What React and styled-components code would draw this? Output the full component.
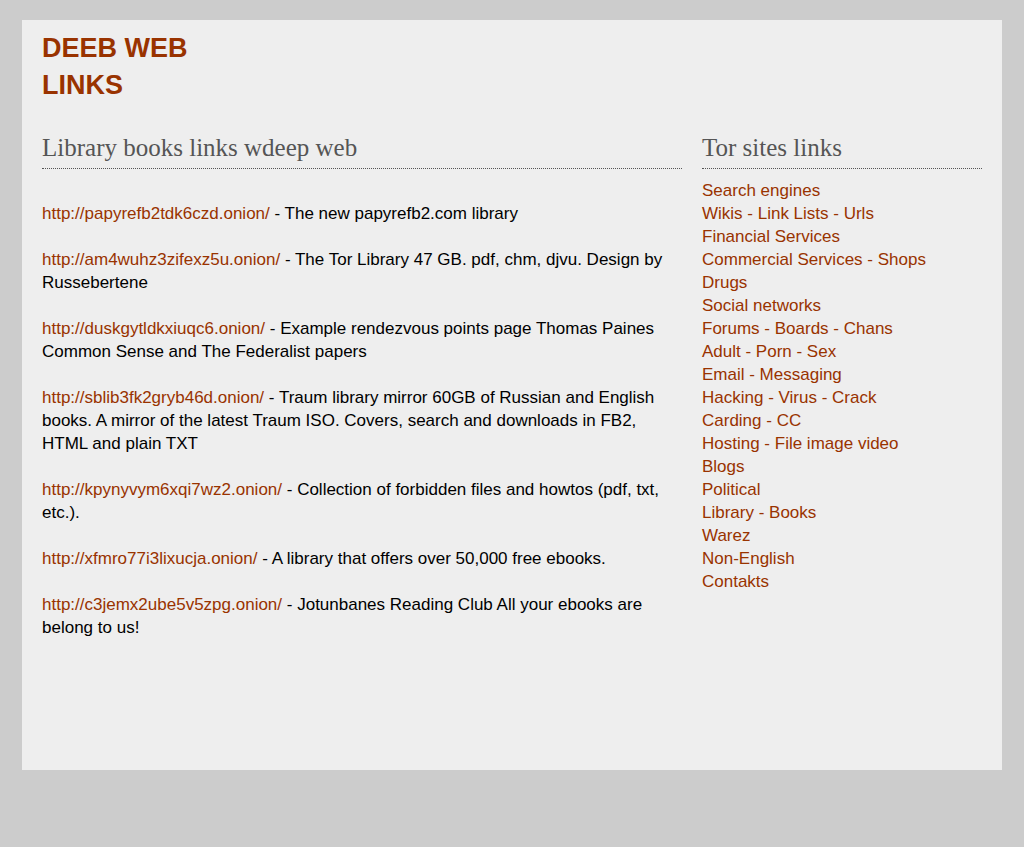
import React from "react";
import styled, { createGlobalStyle } from "styled-components";

const GlobalStyle = createGlobalStyle`
  html, body {
    margin: 0;
    padding: 0;
    background: #cccccc;
  }
  body {
    font-family: "Liberation Sans", Arial, sans-serif;
    font-size: 17px;
    color: #000;
  }
`;

const books = [
  {
    url: "http://papyrefb2tdk6czd.onion/",
    text: "The new papyrefb2.com library",
  },
  {
    url: "http://am4wuhz3zifexz5u.onion/",
    text: "The Tor Library 47 GB. pdf, chm, djvu. Design by Russebertene",
  },
  {
    url: "http://duskgytldkxiuqc6.onion/",
    text: "Example rendezvous points page Thomas Paines Common Sense and The Federalist papers",
  },
  {
    url: "http://sblib3fk2gryb46d.onion/",
    text: "Traum library mirror 60GB of Russian and English books. A mirror of the latest Traum ISO. Covers, search and downloads in FB2, HTML and plain TXT",
  },
  {
    url: "http://kpynyvym6xqi7wz2.onion/",
    text: "Collection of forbidden files and howtos (pdf, txt, etc.).",
  },
  {
    url: "http://xfmro77i3lixucja.onion/",
    text: "A library that offers over 50,000 free ebooks.",
  },
  {
    url: "http://c3jemx2ube5v5zpg.onion/",
    text: "Jotunbanes Reading Club All your ebooks are belong to us!",
  },
];

const categories = [
  "Search engines",
  "Wikis - Link Lists - Urls",
  "Financial Services",
  "Commercial Services - Shops",
  "Drugs",
  "Social networks",
  "Forums - Boards - Chans",
  "Adult - Porn - Sex",
  "Email - Messaging",
  "Hacking - Virus - Crack",
  "Carding - CC",
  "Hosting - File image video",
  "Blogs",
  "Political",
  "Library - Books",
  "Warez",
  "Non-English",
  "Contakts",
];

export default function App() {
  return (
    <>
      <GlobalStyle />
      <Page>
        <Wrapper>
          <Logo href="#">DEEB WEB LINKS</Logo>
          <Columns>
            <Main>
              <Heading>Library books links wdeep web</Heading>
              <Entries>
                {books.map((b) => (
                  <Entry key={b.url}>
                    <Link href="#">{b.url}</Link> - {b.text}
                  </Entry>
                ))}
              </Entries>
            </Main>
            <Sidebar>
              <Heading>Tor sites links</Heading>
              <Menu>
                {categories.map((c) => (
                  <li key={c}>
                    <Link href="#">{c}</Link>
                  </li>
                ))}
              </Menu>
            </Sidebar>
          </Columns>
        </Wrapper>
      </Page>
    </>
  );
}

const Page = styled.div`
  padding: 20px 22px 77px;
`;

const Wrapper = styled.div`
  background: #eeeeee;
  height: 750px;
  box-sizing: border-box;
  padding: 10px 20px 0;
`;

const Logo = styled.a`
  display: block;
  width: 170px;
  font-family: "Liberation Sans", Arial, sans-serif;
  font-weight: 700;
  font-size: 27px;
  line-height: 37px;
  color: #993300;
  text-decoration: none;
`;

const Columns = styled.div`
  display: flex;
  gap: 20px;
  margin-top: 29px;
`;

const Main = styled.div`
  width: 640px;
`;

const Sidebar = styled.div`
  width: 280px;
`;

const Heading = styled.h2`
  margin: 0 0 10px;
  padding-bottom: 6px;
  font-family: "Liberation Serif", "Times New Roman", serif;
  font-weight: 400;
  font-size: 25px;
  line-height: 29px;
  color: #555555;
  border-bottom: 1px dotted #555555;
`;

const Entries = styled.div`
  padding-top: 23px;
`;

const Entry = styled.p`
  margin: 0 0 23px;
  line-height: 23px;
`;

const Link = styled.a`
  color: #993300;
  text-decoration: none;
`;

const Menu = styled.ul`
  list-style: none;
  margin: 0;
  padding: 0;
  line-height: 23px;
`;
